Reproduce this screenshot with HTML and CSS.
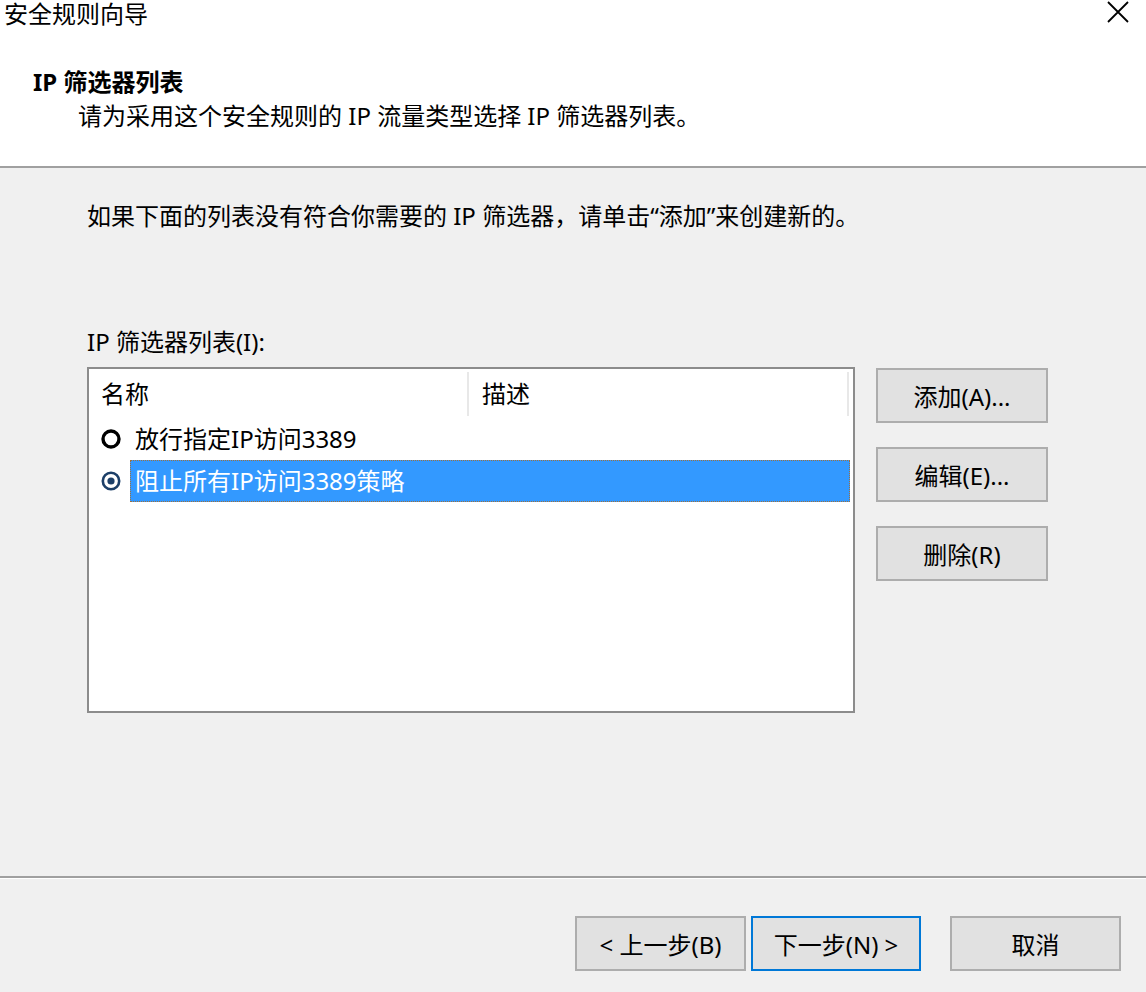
FILE: index.html
```html
<!DOCTYPE html>
<html lang="zh-CN">
<head>
<meta charset="utf-8">
<title>安全规则向导</title>
<link rel="stylesheet" href="styles.css">
</head>
<body>
<div class="window">
  <div class="header">
    <div class="titlebar">
      <span class="title">安全规则向导</span>
      <svg class="close" width="22" height="22" viewBox="0 0 22 22"><path d="M1 1L21 21M21 1L1 21" stroke="#000" stroke-width="1.8" fill="none"/></svg>
    </div>
    <div class="heading">IP 筛选器列表</div>
    <div class="subheading">请为采用这个安全规则的 IP 流量类型选择 IP 筛选器列表。</div>
  </div>
  <div class="content">
    <p class="intro">如果下面的列表没有符合你需要的 IP 筛选器，请单击“添加”来创建新的。</p>
    <div class="label">IP 筛选器列表(I):</div>
    <div class="list-area">
      <div class="listbox">
        <div class="list-head">
          <div class="col col-name">名称</div>
          <div class="col col-desc">描述</div>
        </div>
        <div class="row">
          <svg class="radio" width="20" height="20" viewBox="0 0 20 20"><circle cx="10" cy="10" r="8" fill="#fff" stroke="#000" stroke-width="3.4"/></svg>
          <span class="row-text">放行指定IP访问3389</span>
        </div>
        <div class="row selected">
          <svg class="radio" width="20" height="20" viewBox="0 0 20 20"><circle cx="10" cy="10" r="8.2" fill="#fff" stroke="#1c3f68" stroke-width="2.6"/><circle cx="10" cy="10" r="3.6" fill="#1c3f68"/></svg>
          <span class="row-text">阻止所有IP访问3389策略</span>
        </div>
      </div>
      <div class="side-buttons">
        <button class="btn side">添加(A)...</button>
        <button class="btn side">编辑(E)...</button>
        <button class="btn side">删除(R)</button>
      </div>
    </div>
  </div>
  <div class="separator"></div>
  <div class="footer">
    <button class="btn nav">&lt; 上一步(B)</button>
    <button class="btn nav btn-default">下一步(N) &gt;</button>
    <button class="btn nav cancel">取消</button>
  </div>
</div>
</body>
</html>
```
FILE: styles.css
```css
html, body {
  margin: 0;
  padding: 0;
}
body {
  font-family: "Noto Sans", "Noto Sans CJK SC", sans-serif;
  font-size: 24px;
  color: #000;
  background: #f0f0f0;
}
.window {
  width: 1146px;
  height: 992px;
  display: flex;
  flex-direction: column;
  background: #f0f0f0;
  overflow: hidden;
}
.header {
  background: #fff;
  height: 166px;
  border-bottom: 2px solid #a0a0a0;
  flex: none;
}
.titlebar {
  height: 30px;
  display: flex;
  justify-content: space-between;
  align-items: flex-start;
  padding: 0 17px 0 4px;
}
.title {
  line-height: 30px;
  margin-top: -1px;
}
.close {
  margin-top: 1px;
}
.heading {
  margin-top: 35px;
  padding-left: 33px;
  font-weight: bold;
  line-height: 34px;
}
.subheading {
  padding-left: 78px;
  line-height: 34px;
}
.content {
  flex: 1;
  padding: 31px 0 0 87px;
}
.intro {
  margin: 0;
  line-height: 34px;
}
.label {
  margin-top: 92px;
  line-height: 34px;
}
.list-area {
  margin-top: 8px;
  display: flex;
  gap: 21px;
  align-items: flex-start;
}
.listbox {
  width: 768px;
  height: 346px;
  box-sizing: border-box;
  border: 2px solid #8c8c8c;
  background: #fff;
}
.list-head {
  height: 49px;
  display: flex;
  align-items: flex-start;
}
.col {
  box-sizing: border-box;
  width: 380px;
  height: 44px;
  margin-top: 3px;
  line-height: 44px;
  border-right: 2px solid #e8e8e8;
}
.col-name {
  padding-left: 12px;
}
.col-desc {
  padding-left: 13px;
}
.row {
  height: 42px;
  display: flex;
  align-items: center;
  padding-left: 12px;
}
.radio {
  flex: none;
}
.row-text {
  flex: 1;
  box-sizing: border-box;
  height: 42px;
  line-height: 40px;
  margin-left: 9px;
  margin-right: 3px;
  padding: 0 4px;
  border: 1px solid transparent;
}
.row.selected .row-text {
  background: #3399ff;
  color: #fff;
  border: 1px dotted #a0703a;
}
.side-buttons {
  display: flex;
  flex-direction: column;
  gap: 24px;
  margin-top: 1px;
}
.btn {
  font: inherit;
  color: #000;
  background: #e1e1e1;
  border: 2px solid #adadad;
  padding: 0;
  margin: 0;
  box-sizing: border-box;
  height: 55px;
}
.side {
  width: 172px;
}
.separator {
  flex: none;
  height: 0;
  border-top: 2px solid #a0a0a0;
  border-bottom: 1px solid #fff;
}
.footer {
  flex: none;
  height: 113px;
  box-sizing: border-box;
  display: flex;
  justify-content: flex-end;
  align-items: flex-start;
  gap: 5px;
  padding: 37px 25px 0 0;
}
.nav {
  width: 171px;
}
.btn-default {
  width: 170px;
  border-color: #0078d7;
}
.cancel {
  margin-left: 24px;
}
```
